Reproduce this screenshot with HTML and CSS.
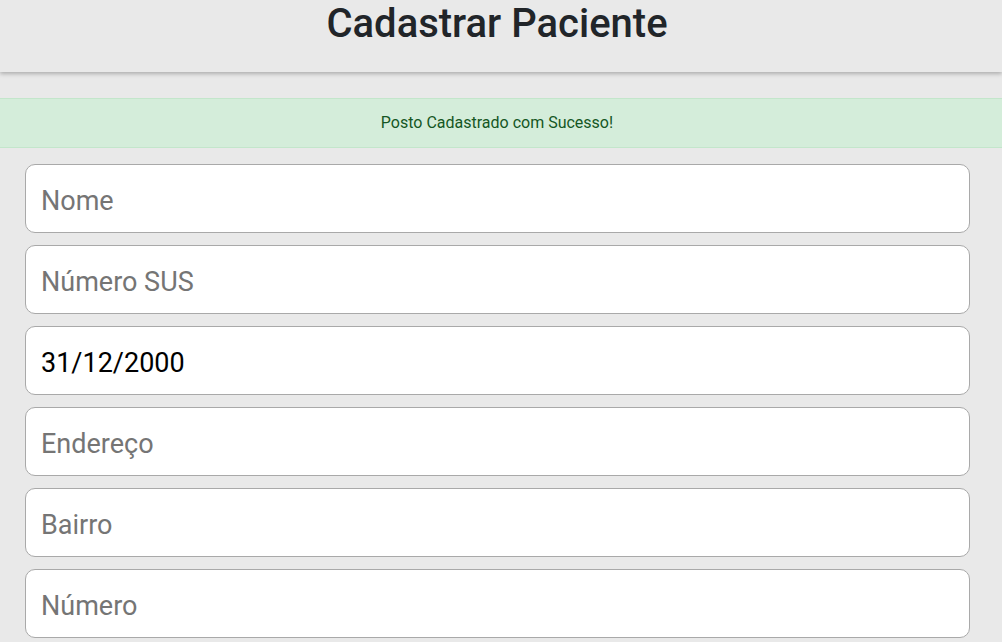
FILE: index.html
```html
<!DOCTYPE html>
<html lang="pt-BR">
<head>
<meta charset="utf-8">
<title>Cadastrar Paciente</title>
<link rel="stylesheet" href="styles.css">
</head>
<body>
<header class="topbar">
  <h1 class="title">Cadastrar Paciente</h1>
</header>
<div class="alert">Posto Cadastrado com Sucesso!</div>
<form class="form">
  <input class="field" type="text" placeholder="Nome">
  <input class="field" type="text" placeholder="Número SUS">
  <input class="field" type="text" value="31/12/2000">
  <input class="field" type="text" placeholder="Endereço">
  <input class="field" type="text" placeholder="Bairro">
  <input class="field" type="text" placeholder="Número">
  <input class="field" type="text" placeholder="Cidade">
</form>
</body>
</html>
```
FILE: styles.css
```css
html, body {
  margin: 0;
  padding: 0;
  background: #e9e9e9;
  font-family: Roboto, "Liberation Sans", sans-serif;
  color: #212529;
  overflow: hidden;
}
.topbar {
  height: 72px;
  background: #e9e9e9;
  box-shadow: 0 2px 4px rgba(0,0,0,0.25);
  display: flex;
  justify-content: center;
}
.title {
  margin: 0;
  font-size: 40px;
  font-weight: 500;
  line-height: 48px;
  color: #212529;
  transform: translateX(-4px);
}
.alert {
  margin-top: 26px;
  background: #d4edda;
  border-top: 1px solid #c3e6cb;
  border-bottom: 1px solid #c3e6cb;
  color: #155724;
  text-align: center;
  font-size: 16px;
  line-height: 24px;
  padding: 12px 28px 12px 20px;
}
.form {
  display: flex;
  flex-direction: column;
  gap: 12px;
  padding: 16px 32px 20px 25px;
}
.field {
  box-sizing: border-box;
  height: 69px;
  width: 100%;
  border: 1px solid #a9a9a9;
  border-radius: 10px;
  background: #fff;
  padding: 4px 15px 0;
  font-family: Roboto, "Liberation Sans", sans-serif;
  font-size: 27px;
  color: #000;
  outline: none;
}
.field::placeholder {
  color: #757575;
}
```
